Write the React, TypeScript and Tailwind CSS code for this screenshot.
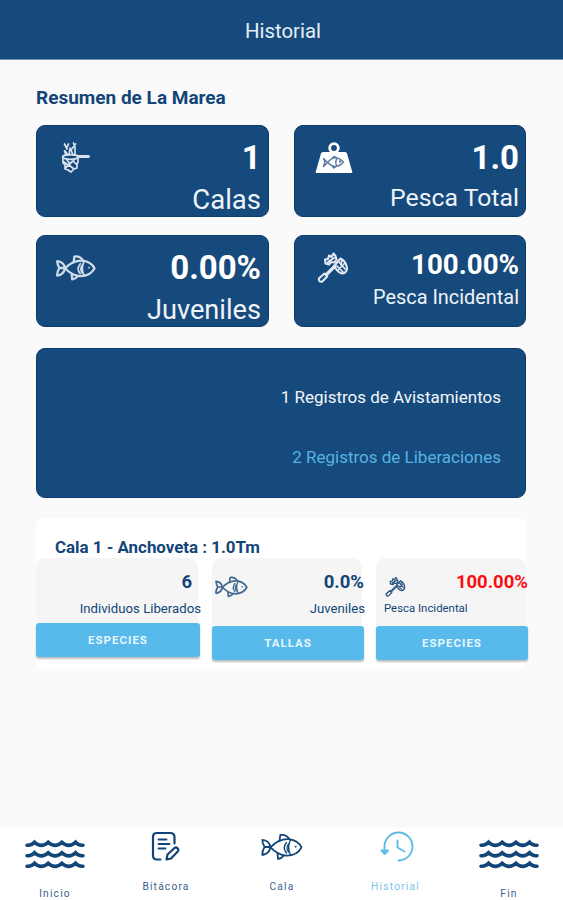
import type { ReactNode } from "react";

type IconProps = { className?: string };

function Fish({ className = "", weight = 1.8 }: IconProps & { weight?: number }) {
  return (
    <svg viewBox="0 0 42 28" className={className} fill="none" stroke="currentColor" strokeWidth={weight} strokeLinecap="round" strokeLinejoin="round">
      <path d="M9.5 14.3C15 8.5 21 5.8 28 6.2C34 7 38.500 10.500 40.500 14.300C37.500 20 31.500 22.800 25 22.600C18.500 22 13.500 18.500 9.500 14.300Z" />
      <path d="M9.500 14.300C8.500 9.500 5.500 7 1.300 6.800C1.200 9 1.700 10.500 3.500 14C1.700 17 1 19 1.300 22C5.500 21.600 8.500 19 9.500 14.300M3.500 14H9" />
      <path d="M18.500 8L19.300 2C23 1.300 26.500 3 28.500 6.200M16.500 20.500L17 26C20 25.500 21.500 24.500 23 22.500" />
      <path d="M29.500 7C27 12 27 17 29.500 21.800M25.500 9.500C22.500 13 22.500 16.500 25.500 20M28 10.500C25.500 13 25.500 16.500 27.500 19" strokeWidth={weight * 0.75} />
      <circle cx="34.500" cy="13.700" r="0.5" strokeWidth="1" />
    </svg>
  );
}

function Net({ className = "" }: IconProps) {
  return (
    <svg viewBox="0 0 30 32" className={className} fill="none" stroke="currentColor" strokeWidth="1.700" strokeLinecap="round" strokeLinejoin="round">
      <path d="M3.500 2L6 7M7.500 2L5.500 6M4 9L7 13M9 6L8 13M12.500 1L14 5V13M14.500 2L10 8L12 13M5 13L3.500 9" />
      <ellipse cx="9.500" cy="15" rx="8" ry="2.300" />
      <path d="M17 14.500H27.500" strokeWidth="2.800" />
      <path d="M2 16V21L4 23V27L7 28L10 30L13 27L16 26V22L17 20V16M3 20L7 23L12 19L16 23M4 26L8 23L13 27M6 18L9 22L13 18" />
    </svg>
  );
}

function FishWeight({ className = "" }: IconProps) {
  return (
    <svg viewBox="0 0 38 32" className={className} fill="none">
      <circle cx="19" cy="6" r="4.300" stroke="currentColor" strokeWidth="2.800" />
      <path d="M8 10H30Q31.500 10 32 11.500L37.300 30Q37.500 31 36.500 31H1.500Q.5 31 .7 30L6 11.500Q6.500 10 8 10Z" fill="currentColor" />
      <g stroke="#57789f" strokeWidth="1.400" strokeLinejoin="round">
        <path d="M12.500 20.500Q20 11.500 28.500 20Q21 28.500 12.500 20.500L8.500 16.500L10 20L8.500 24.500L12.500 20.500M17 16.500L19 14.500L22 16M17 24L19 26L21 24.500M22 16.500Q19.500 20 22 24.500" />
        <circle cx="25" cy="19.500" r=".5" />
      </g>
    </svg>
  );
}

function Bycatch({ className = "" }: IconProps) {
  return (
    <svg viewBox="0 0 32 32" className={className} fill="none" stroke="currentColor" strokeWidth="2.100" strokeLinecap="round" strokeLinejoin="round">
      <path d="M1.800 26.500L7.500 21.500L10.300 24.300L5.300 29.500Q1.800 30.500 1.800 26.500Z" />
      <path d="M9.500 22.500L18 14" strokeWidth="3.200" />
      <path d="M17.500 13.500L23.500 6.500Q29 9 30 16Q30 21 25 21.500Q19.500 20 17.500 13.500Z" />
      <path d="M22 10L28 17M20 14L26 20M28 11L21 18M25 8L24 13" strokeWidth="1.700" />
      <path d="M8.500 11.500L8 7.500L11 7L12 3.500L14.500 5L16.500 1.500L18.500 4L19.500 7.500L17.500 10.500L14 10L12 12.500L8.500 11.500ZM11 10L17 6" />
    </svg>
  );
}

function Waves({ className = "" }: IconProps) {
  const wave = "Q6.500 6.800 9.600 3.200Q16.300 9.600 23.200 3.200Q30 9.600 36.900 3.200Q43.700 9.600 50.500 3.200Q53.500 6.800 58 6.200";
  return (
    <svg viewBox="0 0 60 32" className={className} fill="none" stroke="currentColor" strokeWidth="3.600" strokeLinecap="round" strokeLinejoin="miter">
      <path d={`M2 6.200${wave}`} />
      <path d={`M2 6.200${wave}`} transform="translate(0 10.500)" />
      <path d={`M2 6.200${wave}`} transform="translate(0 21)" />
    </svg>
  );
}

function Logbook({ className = "" }: IconProps) {
  return (
    <svg viewBox="0 0 30 32" className={className} fill="none" stroke="currentColor" strokeWidth="2.200" strokeLinecap="round" strokeLinejoin="round">
      <path d="M9.500 28.500H6Q2 28.500 2 24.500V6Q2 2 6 2H19Q23.500 2 23.500 6V12.500" />
      <path d="M7.500 8.500H15.500M7.500 13H18.500M7.500 17.500H14.500" strokeWidth="1.800" />
      <path d="M15.500 28.500L16.500 23.500L23.500 17Q25 15.800 26.800 17.500Q28 19.200 26.500 20.800L20 27.500L15.500 28.500Z" />
    </svg>
  );
}

function History({ className = "" }: IconProps) {
  return (
    <svg viewBox="0 0 34 32" className={className} fill="none" stroke="currentColor" strokeWidth="1.900" strokeLinecap="round" strokeLinejoin="round">
      <path d="M4.500 21V15.500A14 14 0 1 1 18.500 29.500" />
      <path d="M1.500 19.500L4.800 23L8 19.500Z" />
      <path d="M17.500 9.500V16.500L24.500 20.500" />
    </svg>
  );
}

function SummaryCard({ icon, pad, children }: { icon: ReactNode; pad: string; children: ReactNode }) {
  return (
    <section className={`flex h-[92px] rounded-[9px] border border-[#0b3c70] bg-[#174a7c] pl-[19px] text-white ${pad}`}>
      <div className="w-[42px] shrink-0 pt-[16px]">{icon}</div>
      <div className="-mt-px flex min-w-0 flex-1 flex-col whitespace-nowrap text-right">{children}</div>
    </section>
  );
}

function Action({ children }: { children: string }) {
  return (
    <button className="h-[34px] w-full shrink-0 rounded-[3px] bg-[#57baea] text-[11.500px] font-bold leading-[34px] tracking-[1px] text-[#e6f6fe] shadow-[0_2px_2px_rgba(0,0,0,0.25)]">
      {children}
    </button>
  );
}

function NavItem({ icon, label, className }: { icon: ReactNode; label: string; className: string }) {
  return (
    <a className={`flex flex-col items-center ${className}`}>
      {icon}
      <span className="text-[10.200px] leading-[16px] tracking-[1.200px] opacity-85">{label}</span>
    </a>
  );
}

export default function App() {
  return (
    <div className="flex h-[900px] w-[563px] flex-col overflow-hidden bg-[#fafafa] font-[Roboto,sans-serif] text-[#124578]">
      <header className="h-[60px] shrink-0 border-b border-[#7193b4] bg-[#174a7c] pl-[3px] text-center text-[20.400px] leading-[62px] text-[#e5edf5]">
        Historial
      </header>
      <main className="flex flex-1 flex-col px-9">
        <h1 className="h-[65px] text-[19px] font-bold leading-[75px]">Resumen de La Marea</h1>
        <div className="grid w-[490px] grid-cols-[233px_232px] gap-x-[25px] gap-y-[18px]">
          <SummaryCard pad="pr-[7px]" icon={<Net className="ml-[5px] h-[32px] w-[30px] text-[#d7e2ee]" />}>
            <strong className="text-[33.500px] leading-[65px]">1</strong>
            <span className="text-[27.500px] leading-[20px] text-[#eef3f9]">Calas</span>
          </SummaryCard>
          <SummaryCard pad="pr-[6px]" icon={<FishWeight className="ml-px h-[32px] w-[38px]" />}>
            <strong className="text-[33px] leading-[65px]">1.0</strong>
            <span className="text-[24.800px] leading-[15px] text-[#eef3f9]">Pesca Total</span>
          </SummaryCard>
          <SummaryCard pad="pr-[7px]" icon={<Fish className="mt-[2px] h-[28px] w-[40px] text-[#cfdce9]" weight={2.4} />}>
            <strong className="text-[33px] leading-[65px]">0.00%</strong>
            <span className="text-[27.200px] leading-[20px] text-[#eef3f9]">Juveniles</span>
          </SummaryCard>
          <SummaryCard pad="pr-[6px]" icon={<Bycatch className="ml-[3px] h-[32px] w-[32px] text-[#e3ebf4]" />}>
            <strong className="text-[27.700px] leading-[59px]">100.00%</strong>
            <span className="text-[19.900px] leading-[8px] text-[#eef3f9]">Pesca Incidental</span>
          </SummaryCard>
        </div>
        <section className="mt-[21px] flex h-[150px] w-[490px] flex-col rounded-[9px] border border-[#0b3c70] bg-[#174a7c] pr-[24px] pt-[18px] text-right text-[17px] leading-[60px]">
          <p className="text-[#f2f6fa]">1 Registros de Avistamientos</p>
          <p className="text-[#55b3e2]">2 Registros de Liberaciones</p>
        </section>
        <section className="mt-[20px] h-[151px] w-[490px] rounded-[8px] bg-white">
          <h2 className="h-10 pl-[19px] text-[16.900px] font-bold leading-[59px]">Cala 1 - Anchoveta : 1.0Tm</h2>
          <div className="grid w-[492px] grid-cols-[164px_152px_152px] gap-x-3 text-right">
            <article>
              <div className="mr-[2px] h-[65px] rounded-t-[9px] bg-[#f5f5f5]">
                <strong className="block h-10 pr-[6px] text-[18.500px] leading-[48px]">6</strong>
                <span className="-mr-[3px] block whitespace-nowrap text-[13.200px] leading-[22px]">Individuos Liberados</span>
              </div>
              <Action>ESPECIES</Action>
            </article>
            <article>
              <div className="mr-[2px] h-[68px] rounded-t-[9px] bg-[#f5f5f5]">
                <div className="-mr-[2px] flex h-10 justify-between pl-[3px]">
                  <Fish className="mt-[18px] h-[22px] w-[33px] text-[#42698f]" weight={2.2} />
                  <strong className="text-[18.500px] leading-[48px]">0.0%</strong>
                </div>
                <span className="-mr-[3px] block text-[13.200px] leading-[22px]">Juveniles</span>
              </div>
              <Action>TALLAS</Action>
            </article>
            <article>
              <div className="mr-[2px] h-[68px] rounded-t-[9px] bg-[#f5f5f5]">
                <div className="-mr-[2px] flex h-10 justify-between pl-[9px]">
                  <Bycatch className="mt-[18px] h-[22px] w-[21px] text-[#315b85]" />
                  <strong className="text-[18.500px] leading-[48px] text-[#fb0d10]">100.00%</strong>
                </div>
                <span className="block pl-[8px] text-left text-[11.400px] leading-[20px]">Pesca Incidental</span>
              </div>
              <Action>ESPECIES</Action>
            </article>
          </div>
        </section>
      </main>
      <nav className="grid h-[72px] shrink-0 grid-cols-[110px_112px_120px_107px_114px] bg-white">
        <NavItem className="pt-[11px]" label="Inicio" icon={<Waves className="mb-[15px] h-[32px] w-[60px]" />} />
        <NavItem className="pt-[3px]" label="Bitácora" icon={<Logbook className="mb-[16px] h-[32px] w-[30px]" />} />
        <NavItem className="pt-[5px]" label="Cala" icon={<Fish className="mb-[18px] h-[28px] w-[42px]" />} />
        <NavItem className="pt-[3px] text-[#5fbce8]" label="Historial" icon={<History className="mb-[16px] ml-[2px] h-[32px] w-[34px]" />} />
        <NavItem className="pt-[11px] pl-[6px]" label="Fin" icon={<Waves className="mb-[15px] h-[32px] w-[60px]" />} />
      </nav>
    </div>
  );
}
